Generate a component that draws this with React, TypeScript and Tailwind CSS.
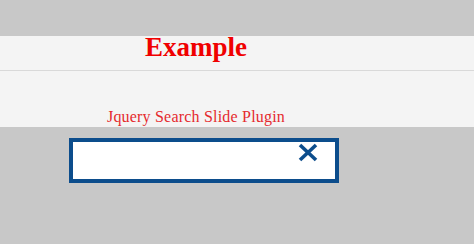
export default function App() {
  return (
    <div className="w-[474px] h-[244px] bg-[#c8c8c8] pt-[36px] overflow-hidden">
      <div className="bg-[#f4f4f4]">
        <div className="h-[35px] border-b border-[#d9d9d9]">
          <h1
            className="w-[392px] text-center text-[27px] leading-[22px] font-bold text-[#f00000]"
            style={{ fontFamily: '"Liberation Serif", "Times New Roman", serif' }}
          >
            Example
          </h1>
        </div>
        <div className="h-[56px] pt-[38px]">
          <p
            className="w-[392px] text-center text-[16px] leading-[16px] tracking-[0.2px] text-[#e52a2e]"
            style={{ fontFamily: '"Liberation Serif", "Times New Roman", serif' }}
          >
            Jquery Search Slide Plugin
          </p>
        </div>
      </div>
      <div className="ml-[69px] mt-[11px] w-[270px] h-[45px] border-4 border-[#0c4d8c] bg-white flex justify-end items-start pr-[17px] pt-[1px]">
        <svg width="20" height="19" viewBox="0 0 20 19">
          <line x1="2" y1="2" x2="18" y2="17" stroke="#0c4d8c" strokeWidth="3.6" />
          <line x1="18" y1="2" x2="2" y2="17" stroke="#0c4d8c" strokeWidth="3.6" />
        </svg>
      </div>
    </div>
  );
}
